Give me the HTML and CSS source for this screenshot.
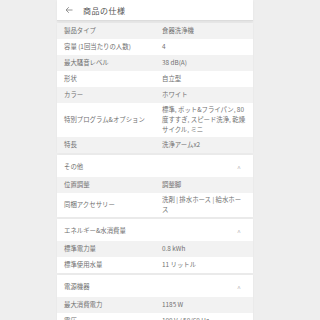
FILE: index.html
```html
<!DOCTYPE html>
<html lang="ja">
<head>
    <meta charset="utf-8">
    <title>商品の仕様</title>
    <link rel="stylesheet" href="styles.css">
</head>
<body>
    <div class="page">
        <header class="top-bar">
            <svg class="back" width="8" height="8" viewBox="0 0 8 8"><path d="M7.5 4H1M3.8 1.2L1 4l2.8 2.8" fill="none" stroke="#8a8a8a" stroke-width="0.9"/></svg>
            <h1>商品の仕様</h1>
        </header>

        <section class="card">
            <div class="row"><span class="label">製品タイプ</span><span class="value">食器洗浄機</span></div>
            <div class="row"><span class="label">容量 (1回当たりの人数)</span><span class="value">4</span></div>
            <div class="row"><span class="label">最大騒音レベル</span><span class="value">38 dB(A)</span></div>
            <div class="row"><span class="label">形状</span><span class="value">自立型</span></div>
            <div class="row"><span class="label">カラー</span><span class="value">ホワイト</span></div>
            <div class="row"><span class="label">特別プログラム&amp;オプション</span><span class="value">標準, ポット&amp;フライパン, 80度すすぎ, スピード洗浄, 乾燥サイクル, ミニ</span></div>
            <div class="row"><span class="label">特長</span><span class="value">洗浄アームx2</span></div>
        </section>

        <section class="card">
            <div class="card-head">その他<span class="chev">^</span></div>
            <div class="row"><span class="label">位置調整</span><span class="value">調整脚</span></div>
            <div class="row"><span class="label">同梱アクセサリー</span><span class="value">洗剤 | 排水ホース | 給水ホース</span></div>
        </section>

        <section class="card">
            <div class="card-head">エネルギー&amp;水消費量<span class="chev">^</span></div>
            <div class="row"><span class="label">標準電力量</span><span class="value">0.8 kWh</span></div>
            <div class="row"><span class="label">標準使用水量</span><span class="value">11 リットル</span></div>
        </section>

        <section class="card">
            <div class="card-head">電源機器<span class="chev">^</span></div>
            <div class="row"><span class="label">最大消費電力</span><span class="value">1185 W</span></div>
            <div class="row"><span class="label">電圧</span><span class="value">100 V / 50/60 Hz</span></div>
        </section>
    </div>
</body>
</html>
```

FILE: styles.css
```css
body { margin: 0; background: #eeeeee; font-family: "Noto Sans CJK JP", "Noto Sans", sans-serif; color: #707070; }
.page { width: 196px; margin-left: 57px; }
.top-bar { height: 20px; background: #fff; border-bottom: 1px solid #dcdcdc; display: flex; align-items: center; padding-left: 8px; box-shadow: 0 1px 2px rgba(0,0,0,0.06); }
.back { margin-right: 10px; }
.top-bar h1 { margin: 0; font-size: 8px; font-weight: normal; color: #555; letter-spacing: 0.5px; }
.card { background: #fff; margin-top: 2px; box-shadow: 0 0 2px rgba(0,0,0,0.05); }
.row { display: flex; align-items: center; min-height: 16px; box-sizing: border-box; padding: 2px 0; font-size: 6.4px; line-height: 10px; }
.row:nth-child(odd) { background: #f2f2f2; }
.card-head + .row, .card-head ~ .row:nth-child(even) { background: #f2f2f2; }
.card-head ~ .row:nth-child(odd) { background: #fff; }
.label { width: 98px; padding-left: 7px; flex-shrink: 0; }
.value { flex: 1; padding-right: 6px; }
.card-head { height: 22px; display: flex; align-items: center; justify-content: space-between; padding: 0 12px 0 7px; font-size: 6.4px; }
.chev { color: #bbb; font-size: 7px; padding-top: 3px; }
```
